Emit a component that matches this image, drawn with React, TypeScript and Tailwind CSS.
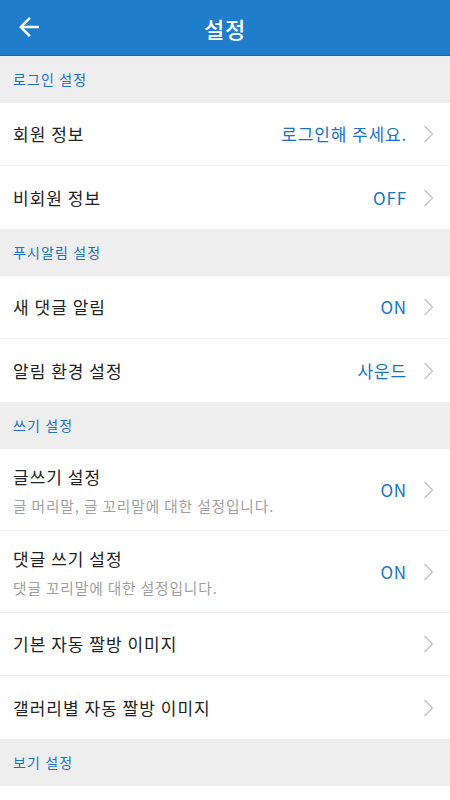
import React from "react";

type Item = {
  title: string;
  sub?: string;
  value?: string;
};

type Section = {
  label: string;
  items: Item[];
};

const sections: Section[] = [
  {
    label: "로그인 설정",
    items: [
      { title: "회원 정보", value: "로그인해 주세요." },
      { title: "비회원 정보", value: "OFF" },
    ],
  },
  {
    label: "푸시알림 설정",
    items: [
      { title: "새 댓글 알림", value: "ON" },
      { title: "알림 환경 설정", value: "사운드" },
    ],
  },
  {
    label: "쓰기 설정",
    items: [
      { title: "글쓰기 설정", sub: "글 머리말, 글 꼬리말에 대한 설정입니다.", value: "ON" },
      { title: "댓글 쓰기 설정", sub: "댓글 꼬리말에 대한 설정입니다.", value: "ON" },
      { title: "기본 자동 짤방 이미지" },
      { title: "갤러리별 자동 짤방 이미지" },
    ],
  },
  {
    label: "보기 설정",
    items: [],
  },
];

const Chevron = () => (
  <svg width="11" height="18" viewBox="0 0 11 18" className="shrink-0">
    <polyline points="1.5,1 9.5,9 1.5,17" fill="none" stroke="#c2c2c2" strokeWidth="1.3" />
  </svg>
);

const BackArrow = () => (
  <svg width="30" height="30" viewBox="0 0 24 24" fill="#ffffff">
    <path d="M20 11H7.83l5.59-5.59L12 4l-8 8 8 8 1.41-1.41L7.83 13H20v-2z" />
  </svg>
);

const Row = ({ item, last }: { item: Item; last: boolean }) => (
  <div className={`flex items-center bg-white pl-[13px] pr-[16px] ${item.sub ? "h-[82px]" : "h-[63px]"} ${last ? "" : "border-b border-[#ececec]"}`}>
    <div className={`flex flex-1 flex-col min-w-0 ${item.sub ? "pt-[3px]" : ""}`}>
      <span className="text-[17px] leading-[22px] tracking-[0.06em] text-[#222222]">{item.title}</span>
      {item.sub && (
        <span className="mt-[8px] text-[14.7px] leading-[20px] tracking-[0.06em] text-[#a0a0a0]">{item.sub}</span>
      )}
    </div>
    {item.value && (
      <span className="mr-[16px] text-[17px] leading-[22px] tracking-[0.05em] text-[#1a73c6]">{item.value}</span>
    )}
    <Chevron />
  </div>
);

export default function App() {
  return (
    <div
      className="w-[450px] h-[800px] bg-white overflow-hidden"
      style={{ fontFamily: '"Noto Sans CJK KR", "Noto Sans", sans-serif' }}
    >
      <header className="relative flex items-center justify-center h-[56px] bg-[#1f7dcc] border-b border-[#1a69b0]">
        <button className="absolute left-[14px] top-[12px]">
          <BackArrow />
        </button>
        <h1 className="text-[22px] font-medium tracking-[0.04em] text-white leading-none">설정</h1>
      </header>
      {sections.map((section) => (
        <div key={section.label}>
          <div className="flex items-center h-[47px] bg-[#eeeeee] px-[13px]">
            <span className="text-[14px] tracking-[0.08em] text-[#1a73c6]">{section.label}</span>
          </div>
          {section.items.map((item, i) => (
            <Row key={item.title} item={item} last={i === section.items.length - 1} />
          ))}
        </div>
      ))}
    </div>
  );
}
